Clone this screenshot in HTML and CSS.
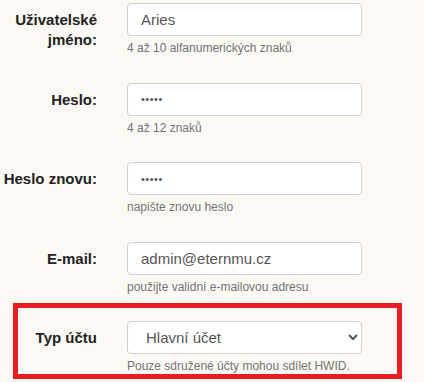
FILE: index.html
```html
<!DOCTYPE html>
<html lang="cs">
<head>
    <meta charset="UTF-8">
    <meta name="viewport" content="width=device-width, initial-scale=1.0">
    <title>Registrace</title>
    <link rel="stylesheet" href="styles.css">
</head>
<body>
    <form class="reg-form">
        <div class="form-row">
            <label class="form-label" for="user">Uživatelské jméno:</label>
            <div class="form-field">
                <input class="form-input" id="user" type="text" value="Aries">
                <div class="form-help">4 až 10 alfanumerických znaků</div>
            </div>
        </div>
        <div class="form-row">
            <label class="form-label" for="pass">Heslo:</label>
            <div class="form-field">
                <input class="form-input" id="pass" type="password" value="aries">
                <div class="form-help">4 až 12 znaků</div>
            </div>
        </div>
        <div class="form-row">
            <label class="form-label" for="pass2">Heslo znovu:</label>
            <div class="form-field">
                <input class="form-input" id="pass2" type="password" value="aries">
                <div class="form-help">napište znovu heslo</div>
            </div>
        </div>
        <div class="form-row">
            <label class="form-label" for="mail">E-mail:</label>
            <div class="form-field">
                <input class="form-input" id="mail" type="text" value="admin@eternmu.cz">
                <div class="form-help">použijte validní e-mailovou adresu</div>
            </div>
        </div>
        <div class="form-row highlighted">
            <label class="form-label" for="type">Typ účtu</label>
            <div class="form-field">
                <select class="form-input form-select" id="type">
                    <option>Hlavní účet</option>
                    <option>Sdružený účet</option>
                </select>
                <div class="form-help">Pouze sdružené účty mohou sdílet HWID.</div>
            </div>
        </div>
    </form>
</body>
</html>
```

FILE: styles.css
```css
/* page */
body {
    margin: 0;
    padding-top: 3px;
    background: #fcf9f4;
    font-family: "Liberation Sans", Arial, sans-serif;
    color: #222;
}

/* form rows */
.form-row {
    display: grid;
    grid-template-columns: 97px 235px;
    column-gap: 30px;
    margin-bottom: 26.5px;
}

.form-label {
    text-align: right;
    font-weight: bold;
    font-size: 15px;
    line-height: 20px;
    padding-top: 7px;
}

/* inputs */
.form-input {
    display: block;
    box-sizing: border-box;
    width: 100%;
    height: 33px;
    padding: 0 13px;
    border: 1px solid #cfcfcf;
    border-radius: 4px;
    background: #fff;
    font-family: inherit;
    font-size: 15px;
    color: #555;
}

.form-input[type="password"] {
    font-size: 11px;
    letter-spacing: 0.5px;
}

.form-select {
    padding-left: 14px;
}

.form-help {
    margin-top: 5px;
    font-size: 12px;
    line-height: 15px;
    color: #737373;
}

/* annotation frame */
.highlighted {
    position: relative;
    margin-top: 1px;
}

.highlighted::after {
    content: "";
    position: absolute;
    left: 13px;
    top: -18px;
    width: 389px;
    height: 76px;
    box-sizing: border-box;
    border: 5px solid #ec1c24;
}
```
